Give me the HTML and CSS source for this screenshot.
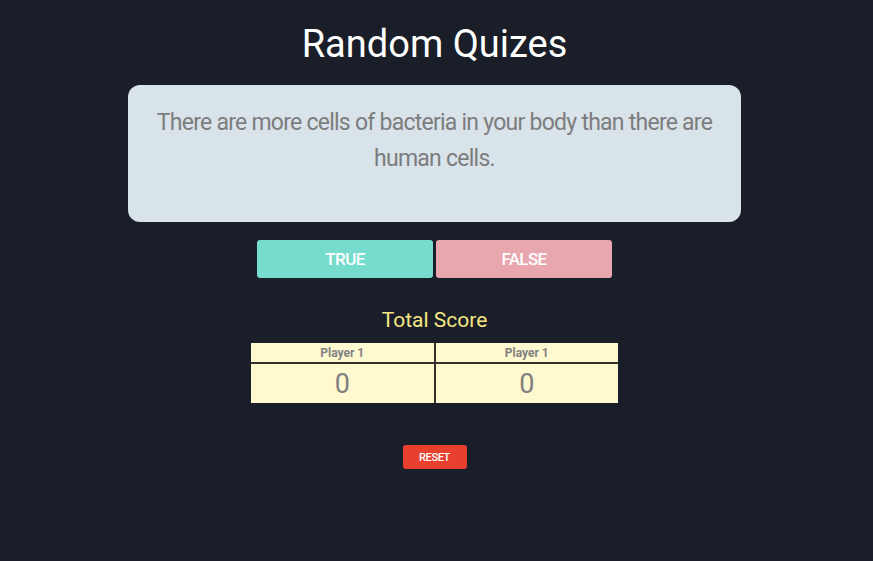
FILE: index.html
```html
<!DOCTYPE html>
<html>
<head>
<meta charset="utf-8">
<link rel="stylesheet" href="styles.css">
</head>
<body>
<main class="app">
  <h1 class="title">Random Quizes</h1>
  <section class="question">
    <p>There are more cells of bacteria in your body than there are human cells.</p>
  </section>
  <div class="answers">
    <button class="btn btn-true">TRUE</button>
    <button class="btn btn-false">FALSE</button>
  </div>
  <h2 class="score-title">Total Score</h2>
  <table class="score">
    <thead>
      <tr><th>Player 1</th><th>Player 1</th></tr>
    </thead>
    <tbody>
      <tr><td>0</td><td>0</td></tr>
    </tbody>
  </table>
  <button class="reset">RESET</button>
</main>
</body>
</html>
```
FILE: styles.css
```css
html, body {
  margin: 0;
  padding: 0;
  background: #191e28;
  height: 100%;
}
body {
  font-family: Roboto, "Liberation Sans", sans-serif;
  padding-right: 4px;
}
.app {
  display: flex;
  flex-direction: column;
  align-items: center;
}
.title {
  margin: 18px 0 0;
  font-size: 38px;
  font-weight: 400;
  color: #ffffff;
  line-height: 52px;
  height: 67px;
}
.question {
  box-sizing: border-box;
  width: 613px;
  height: 137px;
  background: #d9e3ea;
  border-radius: 12px;
  padding: 20px 20px;
}
.question p {
  margin: 0;
  font-size: 23px;
  letter-spacing: -0.75px;
  line-height: 36px;
  color: #7d7d7d;
  text-align: center;
}
.answers {
  display: flex;
  gap: 3px;
  margin-top: 18px;
}
.btn {
  width: 176px;
  height: 38px;
  border: none;
  border-radius: 3px;
  color: #ffffff;
  font-family: Roboto, "Liberation Sans", sans-serif;
  font-size: 17px;
  font-weight: 500;
  letter-spacing: -0.6px;
  padding: 0;
}
.btn-true { background: #76dccd; }
.btn-false { background: #e8a7ae; }
.score-title {
  margin: 29px 0 0;
  font-size: 21px;
  line-height: 26px;
  font-weight: 400;
  color: #f8e784;
}
.score {
  margin-top: 10px;
  width: 367px;
  border-collapse: collapse;
  background: #fff9d0;
  color: #808080;
  text-align: center;
}
.score th {
  font-size: 12px;
  font-weight: 700;
  height: 19px;
  padding: 0;
  border-bottom: 2px solid #30302c;
}
.score td {
  font-size: 27px;
  height: 39px;
  padding: 0;
}
.score th + th, .score td + td {
  border-left: 2px solid #30302c;
}
.reset {
  margin-top: 42px;
  width: 64px;
  height: 24px;
  border: none;
  border-radius: 3px;
  background: #e8402f;
  color: #ffffff;
  font-family: Roboto, "Liberation Sans", sans-serif;
  font-size: 11px;
  font-weight: 500;
  letter-spacing: -0.4px;
  padding: 0;
}
```
